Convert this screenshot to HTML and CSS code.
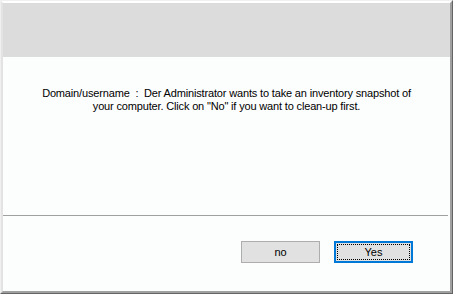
FILE: index.html
```html
<!DOCTYPE html>
<html lang="en">

<head>
  <meta charset="UTF-8">
  <title>Inventory snapshot</title>
  <link rel="stylesheet" href="styles.css">
</head>

<body>
  <div class="window">
    <div class="frame">
      <div class="header"></div>
      <div class="message">
        <p>Domain/username&nbsp;&nbsp;:&nbsp;&nbsp;Der Administrator wants to take an inventory snapshot of<br>
          your computer. Click on "No" if you want to clean-up first.</p>
      </div>
      <hr class="separator">
      <div class="buttons">
        <button class="btn">no</button>
        <button class="btn btn-default"><span class="focus">Yes</span></button>
      </div>
    </div>
  </div>
</body>

</html>
```

FILE: styles.css
```css
html,
body {
  margin: 0;
  padding: 0;
}

body {
  width: 453px;
  height: 294px;
  font-family: "Liberation Sans", Arial, sans-serif;
  font-size: 11px;
  color: #000;
}

.window {
  box-sizing: border-box;
  width: 453px;
  height: 294px;
  border: 1px solid;
  border-color: #f0f0f0 #646464 #646464 #f0f0f0;
}

.frame {
  box-sizing: border-box;
  height: 100%;
  border: 2px solid;
  border-color: #ffffff #a0a0a0 #a0a0a0 #e3e3e3;
  background: #fcfdfd;
  display: flex;
  flex-direction: column;
}

.header {
  height: 54px;
  background: #dcdcdc;
}

.message {
  height: 158px;
  padding-top: 30px;
  box-sizing: border-box;
}

.message p {
  margin: 0;
  text-align: center;
  line-height: 13px;
  letter-spacing: -0.16px;
}

.separator {
  margin: 0 2px 0 0;
  border: 0;
  height: 1px;
  background: #a0a0a0;
}

.buttons {
  display: flex;
  justify-content: flex-end;
  gap: 14px;
  padding: 25px 37px 0 0;
}

.btn {
  box-sizing: border-box;
  width: 79px;
  height: 22px;
  padding: 0;
  border: 1px solid #adadad;
  background: #e1e1e1;
  font-family: inherit;
  font-size: 11px;
  color: #000;
}

.btn-default {
  border: 2px solid #0078d7;
  padding: 1px;
}

.focus {
  display: block;
  height: 100%;
  box-sizing: border-box;
  border: 1px dotted #000;
  line-height: 14px;
}
```
